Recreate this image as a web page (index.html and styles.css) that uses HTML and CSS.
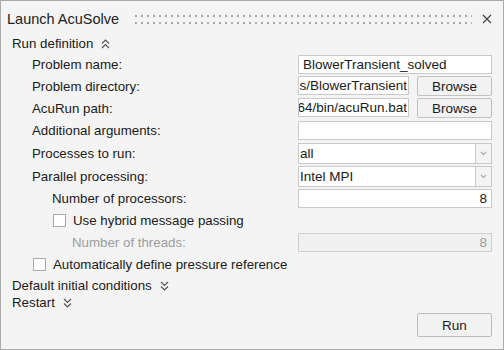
FILE: index.html
```html
<!doctype html>
<html lang="en">
<head>
    <meta charset="utf-8">
    <title>Launch AcuSolve</title>
    <link rel="stylesheet" href="styles.css">
</head>
<body>
<div class="dialog">
    <div class="titlebar">
        <span class="title">Launch AcuSolve</span>
        <svg class="grip" height="9" xmlns="http://www.w3.org/2000/svg">
            <defs>
                <pattern id="dots" width="6" height="7" patternUnits="userSpaceOnUse">
                    <rect width="2" height="2" fill="#a6a6a6"></rect>
                </pattern>
            </defs>
            <rect width="100%" height="9" fill="url(#dots)"></rect>
        </svg>
        <svg class="close" width="10" height="10" viewBox="0 0 10 10">
            <path d="M1 1L9 9M9 1L1 9" stroke="#444" stroke-width="1.2" fill="none"></path>
        </svg>
    </div>

    <div class="section">
        <span>Run definition</span>
        <svg class="chevron" width="9" height="10" viewBox="0 0 9 10">
            <path d="M1 4.5L4.5 1L8 4.5M1 9L4.5 5.5L8 9" stroke="#555" stroke-width="1.2" fill="none"></path>
        </svg>
    </div>

    <div class="row">
        <span class="label">Problem name:</span>
        <div class="field">BlowerTransient_solved</div>
    </div>
    <div class="row">
        <span class="label">Problem directory:</span>
        <div class="field-group">
            <div class="field short">s/BlowerTransient</div>
            <button class="btn">Browse</button>
        </div>
    </div>
    <div class="row">
        <span class="label">AcuRun path:</span>
        <div class="field-group">
            <div class="field short">64/bin/acuRun.bat</div>
            <button class="btn">Browse</button>
        </div>
    </div>
    <div class="row">
        <span class="label">Additional arguments:</span>
        <div class="field"></div>
    </div>
    <div class="row tall">
        <span class="label">Processes to run:</span>
        <div class="select">
            <span class="value">all</span>
            <span class="arrow">
                <svg width="7" height="5" viewBox="0 0 7 5"><path d="M1 1L3.5 3.5L6 1" stroke="#b0b0b0" stroke-width="1.3" fill="none"></path></svg>
            </span>
        </div>
    </div>
    <div class="row">
        <span class="label">Parallel processing:</span>
        <div class="select">
            <span class="value">Intel MPI</span>
            <span class="arrow">
                <svg width="7" height="5" viewBox="0 0 7 5"><path d="M1 1L3.5 3.5L6 1" stroke="#b0b0b0" stroke-width="1.3" fill="none"></path></svg>
            </span>
        </div>
    </div>
    <div class="row">
        <span class="label indent2">Number of processors:</span>
        <div class="field number">8</div>
    </div>
    <div class="row">
        <label class="check indent2"><span class="box"></span>Use hybrid message passing</label>
    </div>
    <div class="row">
        <span class="label indent3 disabled">Number of threads:</span>
        <div class="field number disabled">8</div>
    </div>
    <div class="row">
        <label class="check indent1"><span class="box"></span>Automatically define pressure reference</label>
    </div>

    <div class="section collapsed first">
        <span>Default initial conditions</span>
        <svg class="chevron" width="9" height="10" viewBox="0 0 9 10">
            <path d="M1 1L4.5 4.5L8 1M1 5.5L4.5 9L8 5.5" stroke="#555" stroke-width="1.2" fill="none"></path>
        </svg>
    </div>
    <div class="section collapsed">
        <span>Restart</span>
        <svg class="chevron" width="9" height="10" viewBox="0 0 9 10">
            <path d="M1 1L4.5 4.5L8 1M1 5.5L4.5 9L8 5.5" stroke="#555" stroke-width="1.2" fill="none"></path>
        </svg>
    </div>

    <div class="footer">
        <button class="btn run">Run</button>
    </div>
</div>
</body>
</html>
```

FILE: styles.css
```css
body {
    margin: 0;
    background-color: #f4f4f4;
    font-family: "Liberation Sans", Arial, sans-serif;
    font-size: 13.3px;
    color: #1a1a1a;
}

.dialog {
    box-sizing: border-box;
    width: 504px;
    height: 350px;
    border: 1px solid #ababab;
    background-color: #f4f4f4;
    padding: 0 11px 0 0;
    display: flex;
    flex-direction: column;
}

.titlebar {
    height: 32px;
    display: flex;
    align-items: center;
    padding: 4px 0 0 6px;
    box-sizing: border-box;
}

.title {
    font-size: 14.5px;
    color: #222;
}

.grip {
    flex: 1;
    margin: 1px 2px 0 16px;
}

.close {
    margin: 0 0 0 8px;
    flex-shrink: 0;
}

.section {
    display: flex;
    align-items: center;
    gap: 8px;
    padding-left: 11px;
    height: 20px;
}

.section .chevron {
    margin-top: 1px;
}

.section.collapsed {
    height: 17px;
}

.section.first {
    margin-top: 2px;
}

.row {
    display: flex;
    align-items: center;
    justify-content: space-between;
    height: 22px;
}

.row.tall {
    height: 24px;
}

.label {
    padding-left: 31px;
}

.label.indent2 {
    padding-left: 51px;
}

.label.indent3 {
    padding-left: 71px;
}

.disabled {
    color: #9c9c9c;
}

.field {
    box-sizing: border-box;
    width: 194px;
    height: 19px;
    line-height: 17px;
    border: 1px solid #c9c9c9;
    background-color: #fff;
    padding: 0 4px;
    font-size: 13.5px;
    white-space: nowrap;
    overflow: hidden;
}

.field.number {
    text-align: right;
}

.field.disabled {
    background-color: #f0f0f0;
    border-color: #cfcfcf;
}

.field-group {
    display: flex;
    gap: 8px;
    width: 194px;
}

.field.short {
    width: 111px;
    padding: 0 1px 0 0;
    display: flex;
    justify-content: flex-end;
}

.btn {
    box-sizing: border-box;
    flex: 1;
    height: 20px;
    border: 1px solid #c2c2c2;
    border-radius: 2px;
    background-color: #f2f2f2;
    font-family: "Liberation Sans", Arial, sans-serif;
    font-size: 13.5px;
    color: #1a1a1a;
    padding: 0;
}

.select {
    box-sizing: border-box;
    width: 194px;
    height: 21px;
    border: 1px solid #c9c9c9;
    background-color: #fff;
    display: flex;
    font-size: 13.5px;
}

.select .value {
    flex: 1;
    line-height: 19px;
    padding-left: 1px;
}

.select .arrow {
    width: 15px;
    border-left: 1px solid #c9c9c9;
    background-color: #f4f4f4;
    display: flex;
    align-items: center;
    justify-content: center;
}

.check {
    display: flex;
    align-items: center;
    gap: 7px;
}

.check.indent1 {
    padding-left: 32px;
}

.check.indent2 {
    padding-left: 52px;
}

.box {
    box-sizing: border-box;
    width: 13px;
    height: 13px;
    border: 1px solid #a9a9a9;
    background-color: #fff;
}

.footer {
    display: flex;
    justify-content: flex-end;
    margin-top: auto;
    padding-bottom: 12px;
}

.btn.run {
    flex: none;
    width: 75px;
    height: 24px;
    border-color: #bdbdbd;
}
```
